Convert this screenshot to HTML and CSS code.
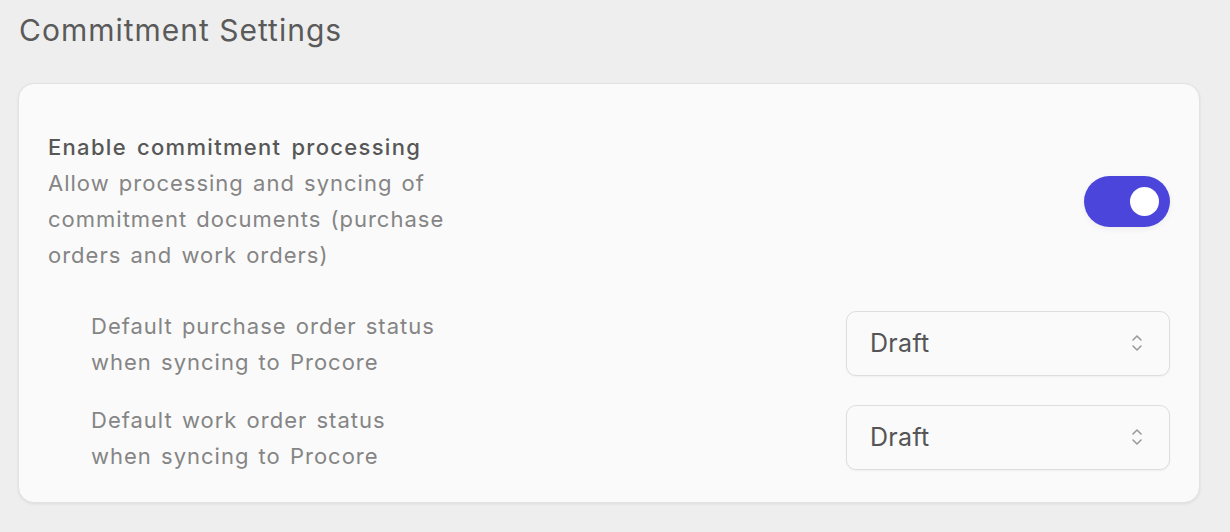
FILE: index.html
```html
<!DOCTYPE html>
<html>
<head>
<meta charset="utf-8">
<link rel="stylesheet" href="styles.css">
</head>
<body>
<div class="page">
  <h1 class="title">Commitment Settings</h1>
  <section class="card">
    <div class="main-row">
      <div class="main-text">
        <div class="label">Enable commitment processing</div>
        <div class="desc">Allow processing and syncing of<br>commitment documents (purchase<br>orders and work orders)</div>
      </div>
      <div class="toggle"><span class="knob"></span></div>
    </div>
    <div class="sub-row">
      <div class="sub-label">Default purchase order status<br>when syncing to Procore</div>
      <div class="select"><span>Draft</span>
        <svg class="chev" width="12" height="20" viewBox="0 0 12 20"><path d="M2 7 L6 3 L10 7 M2 13 L6 17 L10 13" fill="none" stroke="#9a9a9a" stroke-width="1.6" stroke-linecap="round" stroke-linejoin="round"/></svg>
      </div>
    </div>
    <div class="sub-row">
      <div class="sub-label">Default work order status<br>when syncing to Procore</div>
      <div class="select"><span>Draft</span>
        <svg class="chev" width="12" height="20" viewBox="0 0 12 20"><path d="M2 7 L6 3 L10 7 M2 13 L6 17 L10 13" fill="none" stroke="#9a9a9a" stroke-width="1.6" stroke-linecap="round" stroke-linejoin="round"/></svg>
      </div>
    </div>
  </section>
</div>
</body>
</html>
```

FILE: styles.css
```css
* { box-sizing: border-box; }
html, body { margin: 0; padding: 0; }
body {
  background: #eeeeee;
  font-family: Inter, "Noto Sans", sans-serif;
  color: #555;
  width: 1230px;
  height: 532px;
  overflow: hidden;
}
.page { padding: 10px 30px 0 18px; }
.title {
  margin: 0 0 0 1px;
  font-size: 30px;
  font-weight: 400;
  line-height: 40px;
  letter-spacing: 1px;
  color: #5a5a5a;
}
.card {
  margin-top: 33px;
  background: #fafafa;
  border: 1px solid #e2e2e2;
  border-radius: 16px;
  box-shadow: 0 1px 3px rgba(0,0,0,0.08);
  padding: 45px 29px 32px 29px;
  height: 420px;
}
.main-row {
  display: flex;
  justify-content: space-between;
  align-items: center;
}
.main-text { width: 480px; }
.label {
  font-size: 22px;
  font-weight: 500;
  line-height: 36px;
  letter-spacing: 1.3px;
  word-spacing: 3px;
  color: #575757;
}
.desc {
  font-size: 22px;
  line-height: 36px;
  letter-spacing: 1px;
  word-spacing: 2px;
  color: #858585;
}
.toggle {
  width: 86px;
  height: 51px;
  border-radius: 26px;
  background: #4b45dc;
  display: flex;
  align-items: center;
  justify-content: flex-end;
  padding-right: 11px;
  box-shadow: 0 2px 6px rgba(0,0,0,0.06);
}
.knob {
  width: 29px;
  height: 29px;
  border-radius: 50%;
  background: #fff;
}
.sub-row {
  display: flex;
  justify-content: space-between;
  align-items: center;
  padding-left: 43px;
}
.sub-row + .sub-row { margin-top: 20px; }
.main-row + .sub-row { margin-top: 33px; }
.sub-label {
  font-size: 22px;
  line-height: 36px;
  letter-spacing: 1px;
  word-spacing: 2px;
  padding-top: 2px;
  color: #858585;
}
.select {
  width: 324px;
  height: 65px;
  border: 1px solid #dedede;
  border-radius: 10px;
  background: #fafafa;
  box-shadow: 0 1px 2px rgba(0,0,0,0.05);
  display: flex;
  align-items: center;
  justify-content: space-between;
  padding: 0 26px 0 23px;
  font-size: 25px;
  letter-spacing: 0.3px;
  color: #555;
}
.chev { display: block; }
```
